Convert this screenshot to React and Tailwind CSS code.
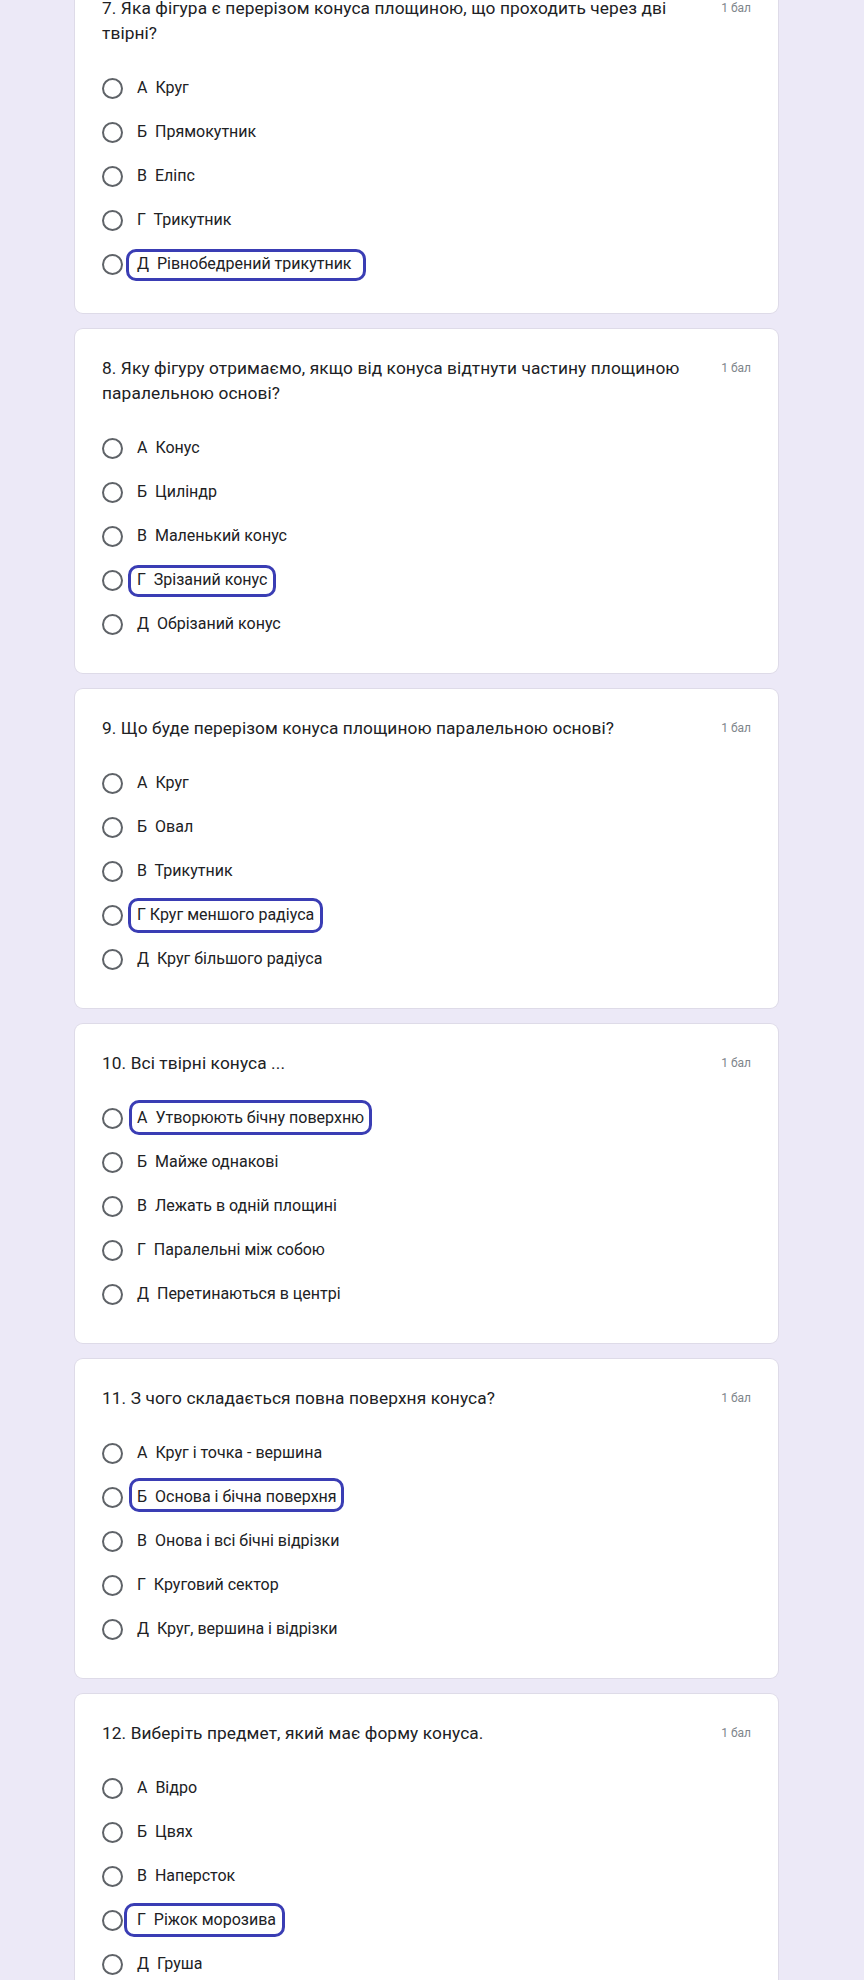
import { Fragment } from "react";

const QUESTIONS = [
  {
    title: "7. Яка фігура є перерізом конуса площиною, що проходить через дві твірні?",
    options: ["А  Круг", "Б  Прямокутник", "В  Еліпс", "Г  Трикутник", "Д  Рівнобедрений трикутник"],
    marked: 4,
    box: "-left-[11px] -right-[14px] -top-[3px] -bottom-[5px]",
  },
  {
    title: "8. Яку фігуру отримаємо, якщо від конуса відтнути частину площиною паралельною основі?",
    options: ["А  Конус", "Б  Циліндр", "В  Маленький конус", "Г  Зрізаний конус", "Д  Обрізаний конус"],
    marked: 3,
    box: "-left-[9px] -right-[9px] -top-[3px] -bottom-[5px]",
  },
  {
    title: "9. Що буде перерізом конуса площиною паралельною основі?",
    options: ["А  Круг", "Б  Овал", "В  Трикутник", "Г Круг меншого радіуса", "Д  Круг більшого радіуса"],
    marked: 3,
    box: "-left-[9px] -right-[9px] -top-[5px] -bottom-[6px]",
  },
  {
    title: "10. Всі твірні конуса ...",
    options: ["А  Утворюють бічну поверхню", "Б  Майже однакові", "В  Лежать в одній площині", "Г  Паралельні між собою", "Д  Перетинаються в центрі"],
    marked: 0,
    box: "-left-[8px] -right-[8px] -top-[6px] -bottom-[5px]",
  },
  {
    title: "11. З чого складається повна поверхня конуса?",
    options: ["А  Круг і точка - вершина", "Б  Основа і бічна поверхня", "В  Онова і всі бічні відрізки", "Г  Круговий сектор", "Д  Круг, вершина і відрізки"],
    marked: 1,
    box: "-left-[8px] -right-[7px] -top-[7px] -bottom-[3px]",
  },
  {
    title: "12. Виберіть предмет, який має форму конуса.",
    options: ["А  Відро", "Б  Цвях", "В  Наперсток", "Г  Ріжок морозива", "Д  Груша"],
    marked: 3,
    box: "-left-[13px] -right-[9px] -top-[5px] -bottom-[5px]",
  },
];

function Option({ label, marked, box }) {
  return (
    <div className="h-11 flex items-center">
      <span className="w-[21px] h-[21px] rounded-full border-2 border-[#5f6368] shrink-0" />
      <span className="relative ml-[14px] text-[16px] leading-6 text-[#202124] whitespace-pre">
        {label}
        {marked && (
          <span className={`absolute ${box} border-[3px] border-[#3a3db4] rounded-[10px]`} />
        )}
      </span>
    </div>
  );
}

function QuestionCard({ q }) {
  return (
    <section className="bg-white rounded-lg ring-1 ring-[#dedbe8] px-[27px] pt-[27px] pb-[27px]">
      <div className="flex items-start">
        <h2 className="flex-1 text-[17.3px] leading-[25px] text-[#202124] font-normal tracking-[0.1px] pr-4">
          {q.title}
        </h2>
        <span className="shrink-0 text-[12px] leading-[25px] text-[#80868b]">1 бал</span>
      </div>
      <div className="mt-5 flex flex-col">
        {q.options.map((o, i) => (
          <Fragment key={o}>
            <Option label={o} marked={i === q.marked} box={q.box} />
          </Fragment>
        ))}
      </div>
    </section>
  );
}

export default function App() {
  return (
    <div className="h-[1980px] overflow-hidden bg-[#ece9f7] font-['Roboto',sans-serif]">
      <div className="-mt-[31px] pl-[75px] w-[778px] flex flex-col gap-4">
        {QUESTIONS.map((q) => (
          <QuestionCard key={q.title} q={q} />
        ))}
      </div>
    </div>
  );
}
